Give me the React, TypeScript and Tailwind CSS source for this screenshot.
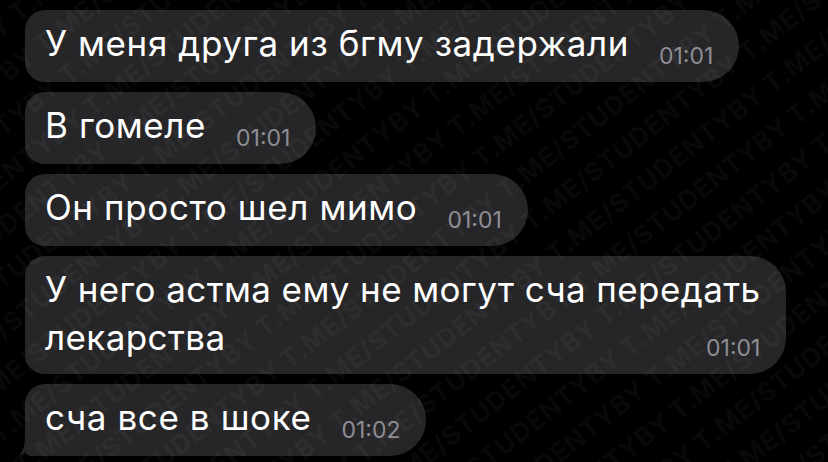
import React from "react";

type Msg = {
  lines: string[];
  time: string;
};

const messages: Msg[] = [
  { lines: ["У меня друга из бгму задержали"], time: "01:01" },
  { lines: ["В гомеле"], time: "01:01" },
  { lines: ["Он просто шел мимо"], time: "01:01" },
  { lines: ["У него астма ему не могут сча передать", "лекарства"], time: "01:01" },
  { lines: ["сча все в шоке"], time: "01:02" },
];

const font = { fontFamily: "Inter, 'Noto Sans', sans-serif" };

function Tail() {
  return (
    <svg
      className="absolute -left-[6px] bottom-0"
      width="26"
      height="22"
      viewBox="0 0 26 22"
    >
      <path d="M6 0 L26 0 L26 22 C18 22 12 20 8 16 C5 19 2 21 0 21.5 C4 18 6 12 6 0 Z" fill="#262628" />
    </svg>
  );
}

function Bubble({ msg, last }: { msg: Msg; last: boolean }) {
  const multi = msg.lines.length > 1;
  return (
    <div
      className={`relative bg-[#262628] text-white rounded-r-[36px] rounded-l-[20px] ${
        last ? "rounded-bl-[6px]" : ""
      }`}
    >
      {last && <Tail />}
      {multi ? (
        <div className="flex flex-col pl-5 pr-[26px] pt-[9px] pb-[14px]">
          <div className="text-[35px] leading-[48px] tracking-[0.4px]">
            {msg.lines.map((l, i) => (
              <div key={i}>{l}</div>
            ))}
          </div>
          <span className="self-end -mt-[24px] text-[23px] leading-none text-[#8d8d93]">
            {msg.time}
          </span>
        </div>
      ) : (
        <div className="flex items-end pl-5 pr-[26px] pt-[12px] pb-[18px]">
          <span className="text-[35px] leading-[42px] tracking-[0.6px]">{msg.lines[0]}</span>
          <span className="ml-[30px] mb-[-4px] text-[23px] leading-none text-[#8d8d93]">
            {msg.time}
          </span>
        </div>
      )}
    </div>
  );
}

function Watermark() {
  return (
    <svg className="pointer-events-none absolute inset-0" width="828" height="462">
      <defs>
        <pattern
          id="wm"
          width="275"
          height="40"
          patternUnits="userSpaceOnUse"
          patternTransform="rotate(-38)"
        >
          <text
            x="0"
            y="30"
            fontSize="26"
            fontWeight="600"
            letterSpacing="1"
            fill="rgba(255,255,255,0.035)"
            fontFamily="Inter, sans-serif"
          >
            T.ME/STUDENTYBY
          </text>
        </pattern>
      </defs>
      <rect width="828" height="462" fill="url(#wm)" />
    </svg>
  );
}

export default function App() {
  return (
    <div className="relative w-[828px] h-[462px] bg-black overflow-hidden" style={font}>
      <div className="flex flex-col items-start gap-[10px] pl-[25px] pt-[10px]">
        {messages.map((m, i) => (
          <Bubble key={i} msg={m} last={i === messages.length - 1} />
        ))}
      </div>
      <Watermark />
    </div>
  );
}
